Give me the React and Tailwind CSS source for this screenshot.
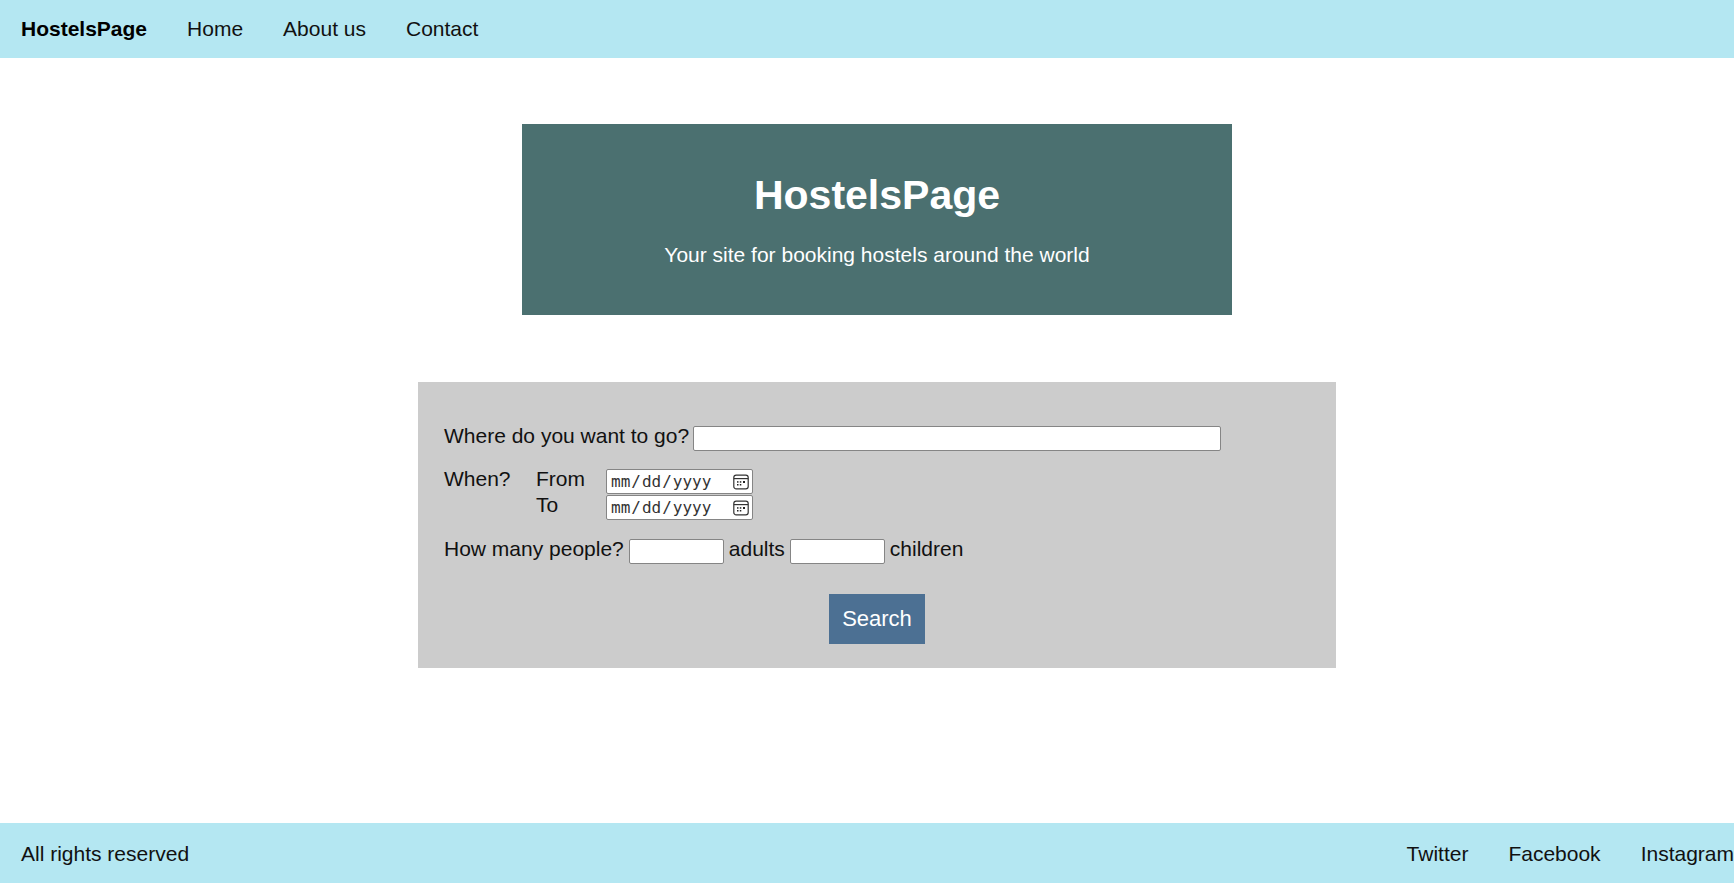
const navLinks = ["Home", "About us", "Contact"];
const socialLinks = ["Twitter", "Facebook", "Instagram"];

const field =
  "mt-0.5 h-[25px] rounded-[2px] border border-[#858585] bg-white px-[3px] text-[17px]";

function Header() {
  return (
    <header className="bg-[#b4e7f2] px-[21px] py-4">
      <nav className="flex items-center gap-10 leading-[26px]">
        <a href="#" className="font-bold text-black">
          HostelsPage
        </a>
        {navLinks.map((label) => (
          <a key={label} href="#">
            {label}
          </a>
        ))}
      </nav>
    </header>
  );
}

function Hero() {
  return (
    <section className="w-full max-w-[710px] bg-[#4b7070] px-6 pt-[47px] pb-12 text-center text-white">
      <h1 className="text-[41px] leading-[48px] font-bold">HostelsPage</h1>
      <p className="mt-6 leading-6">
        Your site for booking hostels around the world
      </p>
    </section>
  );
}

function CalendarIcon() {
  return (
    <svg
      viewBox="0 0 16 16"
      className="pointer-events-none absolute top-1/2 right-1 size-4 -translate-y-1/2"
      fill="none"
      stroke="#333333"
      aria-hidden="true"
    >
      <rect x="0.8" y="1.2" width="14.4" height="13.6" rx="2.4" strokeWidth="1.2" />
      <path d="M0.8 4.6h14.4" strokeWidth="1.2" />
      <g fill="#222222" stroke="none">
        <rect x="4" y="7.2" width="1.5" height="1.5" />
        <rect x="6.8" y="7.2" width="1.5" height="1.5" />
        <rect x="10" y="7" width="2" height="2" />
        <rect x="4" y="10" width="1.5" height="1.5" />
        <rect x="6.8" y="10" width="1.5" height="1.5" />
      </g>
    </svg>
  );
}

function DateField({ id, label }) {
  return (
    <>
      <label htmlFor={id}>{label}</label>
      <div className="relative mt-0.5 h-[25px]">
        <input
          id={id}
          type="date"
          className="block h-[25px] w-[147px] rounded-[2px] border border-[#858585] bg-white px-[3px] font-['DejaVu_Sans_Mono',monospace] text-[16px] leading-5 text-[#333333] [&::-webkit-calendar-picker-indicator]:m-0 [&::-webkit-calendar-picker-indicator]:p-0 [&::-webkit-calendar-picker-indicator]:opacity-0 [&::-webkit-datetime-edit]:p-0 [&::-webkit-datetime-edit-fields-wrapper]:p-0"
        />
        <CalendarIcon />
      </div>
    </>
  );
}

function SearchForm() {
  return (
    <form className="flex w-full max-w-[918px] flex-col bg-[#cccccc] px-[26px] pt-[42px] pb-6">
      <div className="flex items-start gap-1">
        <label htmlFor="place">Where do you want to go?</label>
        <input id="place" type="text" className={`${field} w-[528px]`} />
      </div>

      <div className="mt-4 flex items-start">
        <span className="w-[92px]">When?</span>
        <div className="grid auto-rows-[26px] grid-cols-[70px_auto]">
          <DateField id="from" label="From" />
          <DateField id="to" label="To" />
        </div>
      </div>

      <div className="mt-[18px] flex items-start gap-[5px]">
        <span>How many people?</span>
        <input
          id="adults"
          type="text"
          className={`${field} w-[95px]`}
        />
        <label htmlFor="adults">adults</label>
        <input
          id="children"
          type="text"
          className={`${field} w-[95px]`}
        />
        <label htmlFor="children">children</label>
      </div>

      <button
        type="button"
        className="mt-[30px] self-center bg-[#4c7093] px-[13px] py-3 text-[22px] leading-[26px] text-white"
      >
        Search
      </button>
    </form>
  );
}

function Footer() {
  return (
    <footer className="flex items-center justify-between bg-[#b4e7f2] pt-[19px] pb-[17px] pl-[21px] leading-6">
      <p>All rights reserved</p>
      <nav className="flex gap-10">
        {socialLinks.map((label) => (
          <a key={label} href="#">
            {label}
          </a>
        ))}
      </nav>
    </footer>
  );
}

export default function App() {
  return (
    <div className="flex min-h-screen flex-col bg-white font-['Liberation_Sans',Arial,sans-serif] text-[21px] leading-6 text-[#111111]">
      <Header />
      <main className="flex flex-1 flex-col items-center gap-[67px] py-[66px] pl-5">
        <Hero />
        <SearchForm />
      </main>
      <Footer />
    </div>
  );
}
